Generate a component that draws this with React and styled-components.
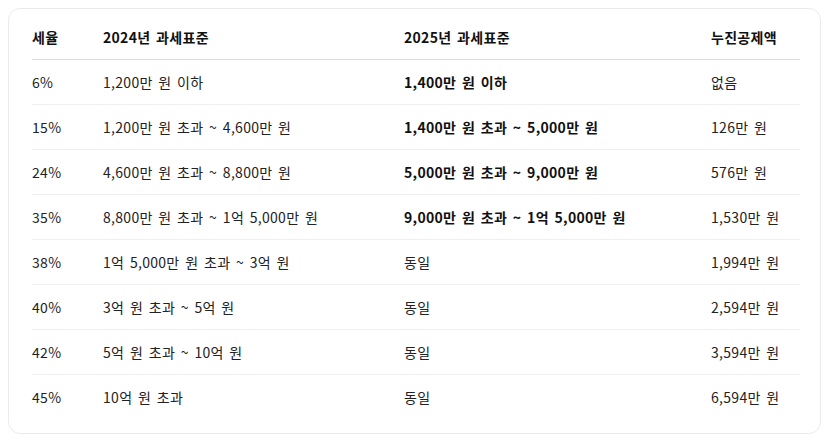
import React from "react";
import styled, { createGlobalStyle } from "styled-components";

const Global = createGlobalStyle`
  html, body { margin: 0; padding: 0; background: #ffffff; }
  body {
    padding: 8px;
    font-family: "Noto Sans CJK KR", "Noto Sans", sans-serif;
    color: #1a1a1a;
  }
`;

const Card = styled.div`
  border: 1px solid #ebebeb;
  border-radius: 12px;
  background: #fff;
  padding: 6px 20px 14px 23px;
  width: 813px;
  box-sizing: border-box;
`;

const Table = styled.table`
  width: 100%;
  border-collapse: collapse;
  table-layout: fixed;
  font-size: 14px;
  line-height: 21px;
  letter-spacing: 0.3px;
  word-spacing: 2.2px;
`;

const Th = styled.th`
  text-align: left;
  font-weight: 700;
  padding: 12px 0 11px;
  border-bottom: 1px solid #dcdcdc;
  color: #111;
`;

const Td = styled.td`
  padding: 12px 0 11px;
  font-weight: ${(p) => (p.$bold ? 700 : 400)};
  color: ${(p) => (p.$bold ? "#111" : "#222")};
  border-bottom: ${(p) => (p.$last ? "none" : "1px solid #efefef")};
  white-space: nowrap;
`;

const rows = [
  ["6%", "1,200만 원 이하", "1,400만 원 이하", "없음", true],
  ["15%", "1,200만 원 초과 ~ 4,600만 원", "1,400만 원 초과 ~ 5,000만 원", "126만 원", true],
  ["24%", "4,600만 원 초과 ~ 8,800만 원", "5,000만 원 초과 ~ 9,000만 원", "576만 원", true],
  ["35%", "8,800만 원 초과 ~ 1억 5,000만 원", "9,000만 원 초과 ~ 1억 5,000만 원", "1,530만 원", true],
  ["38%", "1억 5,000만 원 초과 ~ 3억 원", "동일", "1,994만 원", false],
  ["40%", "3억 원 초과 ~ 5억 원", "동일", "2,594만 원", false],
  ["42%", "5억 원 초과 ~ 10억 원", "동일", "3,594만 원", false],
  ["45%", "10억 원 초과", "동일", "6,594만 원", false],
];

export default function App() {
  return (
    <>
      <Global />
      <Card>
        <Table>
          <colgroup>
            <col style={{ width: 71 }} />
            <col style={{ width: 301 }} />
            <col style={{ width: 307 }} />
            <col />
          </colgroup>
          <thead>
            <tr>
              <Th>세율</Th>
              <Th>2024년 과세표준</Th>
              <Th>2025년 과세표준</Th>
              <Th>누진공제액</Th>
            </tr>
          </thead>
          <tbody>
            {rows.map((r, i) => {
              const last = i === rows.length - 1;
              return (
                <tr key={r[0]}>
                  <Td $last={last}>{r[0]}</Td>
                  <Td $last={last}>{r[1]}</Td>
                  <Td $last={last} $bold={r[4]}>{r[2]}</Td>
                  <Td $last={last}>{r[3]}</Td>
                </tr>
              );
            })}
          </tbody>
        </Table>
      </Card>
    </>
  );
}
